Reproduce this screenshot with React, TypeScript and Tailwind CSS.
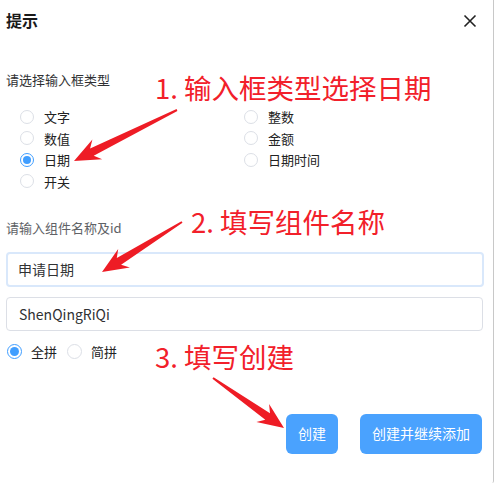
import React from "react";

type P = [number, number];

function arrowPoints(tail: P, tip: P, H = 26, W = 11, w0 = 1, w1 = 4, notch = 6): string {
  const dx = tip[0] - tail[0];
  const dy = tip[1] - tail[1];
  const len = Math.hypot(dx, dy);
  const ux = dx / len;
  const uy = dy / len;
  const nx = -uy;
  const ny = ux;
  const bx = tip[0] - ux * H;
  const by = tip[1] - uy * H;
  const jx = tip[0] - ux * (H - notch);
  const jy = tip[1] - uy * (H - notch);
  const pts: P[] = [
    [tail[0] + nx * w0, tail[1] + ny * w0],
    [jx + nx * w1, jy + ny * w1],
    [bx + nx * W, by + ny * W],
    [tip[0], tip[1]],
    [bx - nx * W, by - ny * W],
    [jx - nx * w1, jy - ny * w1],
    [tail[0] - nx * w0, tail[1] - ny * w0],
  ];
  return pts.map((p) => `${p[0].toFixed(1)},${p[1].toFixed(1)}`).join(" ");
}

function Radio({ checked, label }: { checked?: boolean; label: string }) {
  return (
    <div className="flex items-center gap-[10px] h-[21.5px]">
      <span
        className={
          checked
            ? "w-[14px] h-[14px] rounded-full border border-[#409eff] flex items-center justify-center"
            : "w-[14px] h-[14px] rounded-full border border-[#dcdfe6]"
        }
      >
        {checked && <span className="w-[8px] h-[8px] rounded-full bg-[#409eff]" />}
      </span>
      <span className="text-[13px] text-[#222]">{label}</span>
    </div>
  );
}

export default function App() {
  return (
    <div
      className="relative w-[495px] h-[483px] bg-white overflow-hidden"
      style={{ fontFamily: '"Noto Sans CJK SC", "Noto Sans", sans-serif' }}
    >
      <div className="absolute top-0 right-[1px] bottom-0 w-[2px] border-r border-[#c8c8c8] rounded-br-[4px]" />
      {/* header */}
      <div className="flex items-center justify-between pl-[6px] pr-[18px] pt-[3px] h-[36px]">
        <span className="text-[16px] font-bold text-[#1a1a1a]">提示</span>
        <svg width="14" height="14" viewBox="0 0 14 14" className="mt-[2px]">
          <path d="M1.5 1.5 L12.5 12.5 M12.5 1.5 L1.5 12.5" stroke="#222" strokeWidth="1.6" />
        </svg>
      </div>

      <div className="pl-[6px] pr-[12px]">
        <div className="mt-[35px] text-[13px] text-[#303133] leading-[18px]">请选择输入框类型</div>
        <div className="grid grid-cols-[224px_1fr] pl-[14px] mt-[17px]">
          <Radio label="文字" />
          <Radio label="整数" />
          <Radio label="数值" />
          <Radio label="金额" />
          <Radio label="日期" checked />
          <Radio label="日期时间" />
          <Radio label="开关" />
        </div>

        <div className="mt-[27px] text-[13px] text-[#606266] leading-[18px]">请输入组件名称及id</div>
        <div className="mt-[15px] w-[478px] h-[35px] border-2 border-[#d9e8fb] rounded-[4px] flex items-center pl-[10px] text-[14px] text-[#303133]">
          申请日期
        </div>
        <div className="mt-[10px] w-[477px] h-[34px] border border-[#dcdfe6] rounded-[4px] flex items-center pl-[12px] text-[14px] text-[#303133]">
          ShenQingRiQi
        </div>

        <div className="flex items-center mt-[11px] pl-[1px]">
          <span className="w-[15px] h-[15px] rounded-full border border-[#409eff] flex items-center justify-center">
            <span className="w-[9px] h-[9px] rounded-full bg-[#409eff]" />
          </span>
          <span className="ml-[9px] text-[13px] text-[#222]">全拼</span>
          <span className="ml-[10px] w-[15px] h-[15px] rounded-full border border-[#dcdfe6]" />
          <span className="ml-[9px] text-[13px] text-[#222]">简拼</span>
        </div>

        <div className="flex justify-end gap-[22px] mt-[52px] pr-[1px]">
          <button className="w-[52px] h-[40px] rounded-[6px] bg-[#4aa2fe] text-white text-[14px]">创建</button>
          <button className="w-[122px] h-[40px] rounded-[6px] bg-[#4aa2fe] text-white text-[14px]">创建并继续添加</button>
        </div>
      </div>

      {/* annotations */}
      <div className="absolute left-[155px] top-[72px] text-[27.5px] leading-[30px] text-[#f2202a]">1. 输入框类型选择日期</div>
      <div className="absolute left-[191px] top-[206px] text-[27.5px] leading-[30px] text-[#f2202a]">2. 填写组件名称</div>
      <div className="absolute left-[155px] top-[341px] text-[27.5px] leading-[30px] text-[#f2202a]">3. 填写创建</div>

      <svg className="absolute inset-0 pointer-events-none" width="495" height="483">
        <polygon points={arrowPoints([177, 110], [74, 161])} fill="#ee1c25" />
        <polygon points={arrowPoints([182, 222], [102, 272])} fill="#ee1c25" />
        <polygon points={arrowPoints([213, 378], [284, 428])} fill="#ee1c25" />
      </svg>
    </div>
  );
}
